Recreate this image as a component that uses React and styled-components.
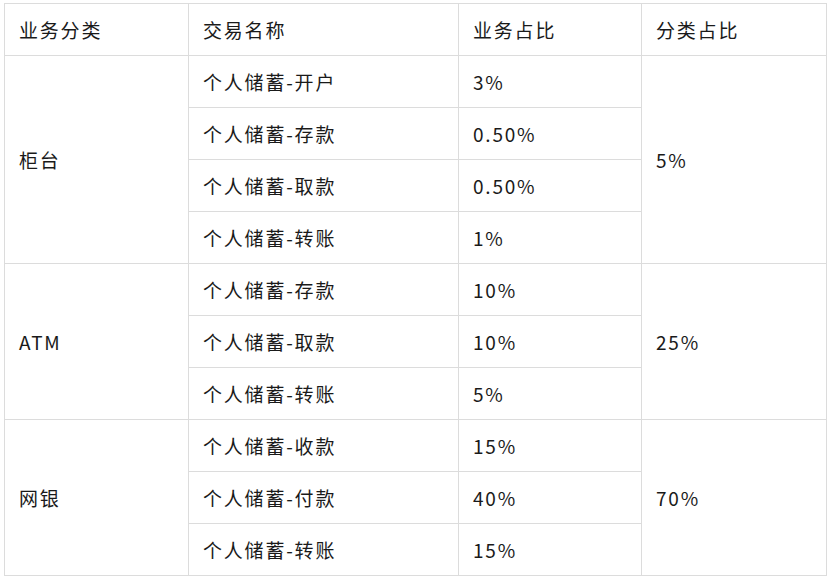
import React from "react";
import styled, { createGlobalStyle } from "styled-components";

const Global = createGlobalStyle`
  html, body { margin: 0; padding: 0; background: #fff; }
  body { font-family: "Noto Sans CJK SC", "Noto Sans", sans-serif; color: #1a1a1a; }
`;

const Page = styled.div`
  padding: 3px 4px;
`;

const Table = styled.table`
  width: 822px;
  border-collapse: collapse;
  table-layout: fixed;
  border: 1px solid #dcdcdc;
`;

const Row = styled.tr`
  height: 52px;
`;

const HeadCell = styled.th`
  border: 1px solid #dcdcdc;
  padding: 0 14px;
  text-align: left;
  font-weight: 400;
  font-size: 19px;
  letter-spacing: 1.8px;
  line-height: 24px;
  vertical-align: middle;
  white-space: nowrap;
`;

const Cell = styled.td`
  border: 1px solid #dcdcdc;
  padding: 0 14px;
  font-size: 19px;
  letter-spacing: 1.8px;
  line-height: 24px;
  vertical-align: middle;
  white-space: nowrap;
`;

const groups = [
  {
    name: "柜台",
    share: "5%",
    items: [
      ["个人储蓄-开户", "3%"],
      ["个人储蓄-存款", "0.50%"],
      ["个人储蓄-取款", "0.50%"],
      ["个人储蓄-转账", "1%"],
    ],
  },
  {
    name: "ATM",
    share: "25%",
    items: [
      ["个人储蓄-存款", "10%"],
      ["个人储蓄-取款", "10%"],
      ["个人储蓄-转账", "5%"],
    ],
  },
  {
    name: "网银",
    share: "70%",
    items: [
      ["个人储蓄-收款", "15%"],
      ["个人储蓄-付款", "40%"],
      ["个人储蓄-转账", "15%"],
    ],
  },
];

export default function App() {
  return (
    <>
      <Global />
      <Page>
        <Table>
          <colgroup>
            <col style={{ width: 184 }} />
            <col style={{ width: 270 }} />
            <col style={{ width: 183 }} />
            <col style={{ width: 185 }} />
          </colgroup>
          <thead>
            <Row>
              <HeadCell>业务分类</HeadCell>
              <HeadCell>交易名称</HeadCell>
              <HeadCell>业务占比</HeadCell>
              <HeadCell>分类占比</HeadCell>
            </Row>
          </thead>
          <tbody>
            {groups.map((g) =>
              g.items.map(([name, pct], i) => (
                <Row key={g.name + i}>
                  {i === 0 && <Cell rowSpan={g.items.length}>{g.name}</Cell>}
                  <Cell>{name}</Cell>
                  <Cell>{pct}</Cell>
                  {i === 0 && <Cell rowSpan={g.items.length}>{g.share}</Cell>}
                </Row>
              ))
            )}
          </tbody>
        </Table>
      </Page>
    </>
  );
}
